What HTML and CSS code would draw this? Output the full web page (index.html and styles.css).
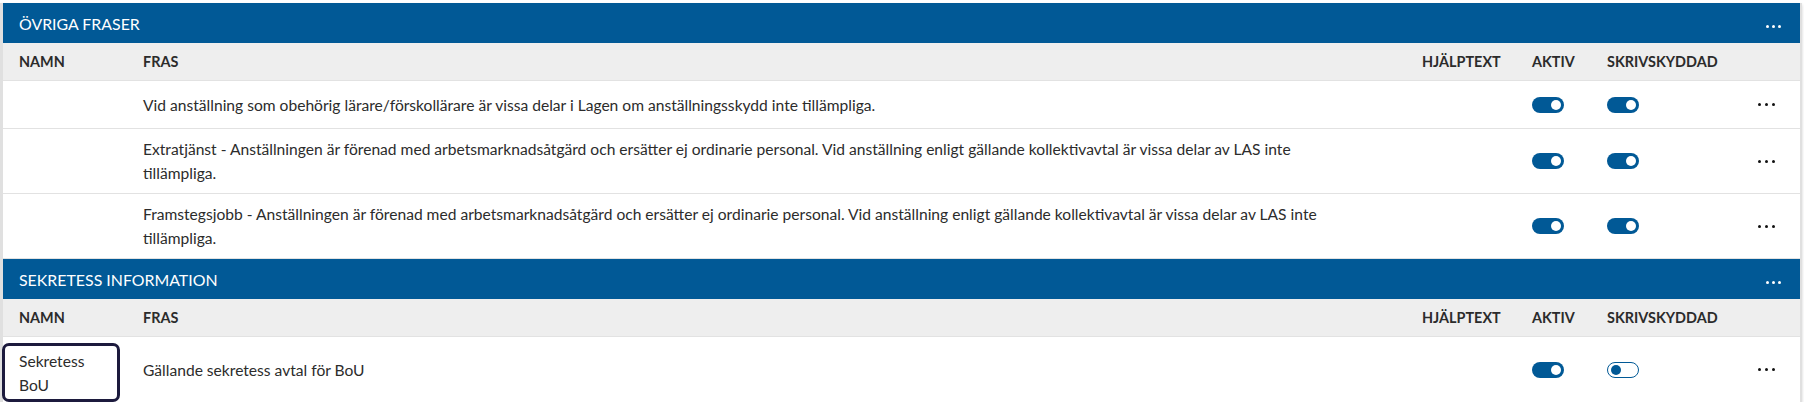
FILE: index.html
```html
<!DOCTYPE html>
<html lang="sv">
<head>
<meta charset="utf-8">
<title>Fraser</title>
<link rel="stylesheet" href="styles.css">
</head>
<body>
<div class="card">
  <section class="group">
    <header class="group-head">
      <span class="group-title">ÖVRIGA FRASER</span>
      <span class="dots dots-light"><i></i><i></i><i></i></span>
    </header>
    <div class="row row-head">
      <div class="cell">NAMN</div>
      <div class="cell">FRAS</div>
      <div class="cell">HJÄLPTEXT</div>
      <div class="cell">AKTIV</div>
      <div class="cell">SKRIVSKYDDAD</div>
      <div class="cell"></div>
    </div>
    <div class="row">
      <div class="cell"></div>
      <div class="cell fras">Vid anställning som obehörig lärare/förskollärare är vissa delar i Lagen om anställningsskydd inte tillämpliga.</div>
      <div class="cell"></div>
      <div class="cell"><span class="toggle on"></span></div>
      <div class="cell"><span class="toggle on"></span></div>
      <div class="cell act"><span class="dots"><i></i><i></i><i></i></span></div>
    </div>
    <div class="row">
      <div class="cell"></div>
      <div class="cell fras">Extratjänst - Anställningen är förenad med arbetsmarknadsåtgärd och ersätter ej ordinarie personal. Vid anställning enligt gällande kollektivavtal är vissa delar av LAS inte tillämpliga.</div>
      <div class="cell"></div>
      <div class="cell"><span class="toggle on"></span></div>
      <div class="cell"><span class="toggle on"></span></div>
      <div class="cell act"><span class="dots"><i></i><i></i><i></i></span></div>
    </div>
    <div class="row">
      <div class="cell"></div>
      <div class="cell fras">Framstegsjobb - Anställningen är förenad med arbetsmarknadsåtgärd och ersätter ej ordinarie personal. Vid anställning enligt gällande kollektivavtal är vissa delar av LAS inte tillämpliga.</div>
      <div class="cell"></div>
      <div class="cell"><span class="toggle on"></span></div>
      <div class="cell"><span class="toggle on"></span></div>
      <div class="cell act"><span class="dots"><i></i><i></i><i></i></span></div>
    </div>
  </section>
  <section class="group">
    <header class="group-head">
      <span class="group-title">SEKRETESS INFORMATION</span>
      <span class="dots dots-light"><i></i><i></i><i></i></span>
    </header>
    <div class="row row-head">
      <div class="cell">NAMN</div>
      <div class="cell">FRAS</div>
      <div class="cell">HJÄLPTEXT</div>
      <div class="cell">AKTIV</div>
      <div class="cell">SKRIVSKYDDAD</div>
      <div class="cell"></div>
    </div>
    <div class="row last">
      <div class="cell namn focused">Sekretess BoU</div>
      <div class="cell fras">Gällande sekretess avtal för BoU</div>
      <div class="cell"></div>
      <div class="cell"><span class="toggle on"></span></div>
      <div class="cell"><span class="toggle off"></span></div>
      <div class="cell act"><span class="dots"><i></i><i></i><i></i></span></div>
    </div>
  </section>
</div>
</body>
</html>
```

FILE: styles.css
```css
* { box-sizing: border-box; }
body {
  margin: 0;
  background: #fff;
  font-family: Lato, "Noto Sans", sans-serif;
  color: #2c2c2c;
}
.card {
  margin: 3px 2px 0 0;
  border-left: 3px solid #e0e0e0;
  border-right: 2px solid #e0e0e0;
  box-shadow: 0 2px 3px rgba(0,0,0,0.18);
  background: #fff;
}
.group-head {
  height: 40px;
  background: #015996;
  color: #fff;
  display: flex;
  align-items: center;
  justify-content: space-between;
  padding: 0 19px 0 16px;
}
.group-title {
  font-size: 15.9px;
}
.dots {
  display: inline-flex;
  gap: 4px;
}
.dots i {
  display: block;
  width: 3px;
  height: 3px;
  border-radius: 50%;
  background: #111;
}
.dots-light {
  gap: 3px;
  margin-top: 6px;
}
.dots-light i { background: #fff; }
.row {
  display: grid;
  grid-template-columns: 124px 1279px 110px 75px 142px 1fr;
  border-bottom: 1px solid #e2e2e2;
  align-items: center;
  min-height: 48px;
}
.row.last { border-bottom: none; min-height: 65px; }
.row-head {
  background: #eeeeee;
  min-height: 38px;
  font-weight: 700;
  color: #2b2b2b;
}
.cell {
  padding: 8px 0 8px 16px;
  font-size: 15.6px;
  line-height: 24px;
}
.row-head .cell {
  font-size: 14.4px;
  padding-top: 0;
  padding-bottom: 0;
}
.fras { padding-right: 41px; }
.act {
  display: flex;
  justify-content: center;
  padding-left: 0;
}
.namn.focused {
  align-self: stretch;
  margin: 6px 7px 0 -1px;
  padding: 0 10px 0 14px;
  display: flex;
  align-items: center;
  border: 3px solid #1c1a3d;
  border-radius: 7px;
  line-height: 24px;
}
.toggle {
  display: block;
  position: relative;
  width: 32px;
  height: 16px;
  border-radius: 8px;
}
.toggle.on { background: #015996; }
.toggle.on::after {
  content: "";
  position: absolute;
  right: 3px;
  top: 3px;
  width: 10px;
  height: 10px;
  border-radius: 50%;
  background: #fff;
}
.toggle.off {
  background: #fff;
  border: 1px solid #015996;
}
.toggle.off::after {
  content: "";
  position: absolute;
  left: 3px;
  top: 2px;
  width: 10px;
  height: 10px;
  border-radius: 50%;
  background: #015996;
}
```
